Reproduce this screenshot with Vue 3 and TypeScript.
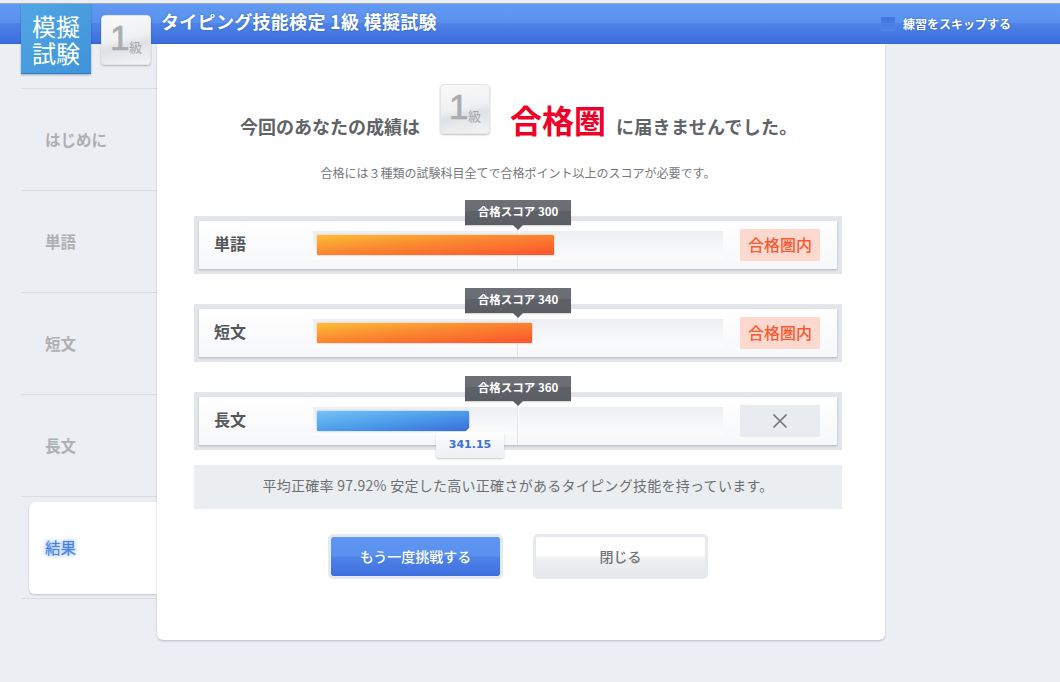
<script setup lang="ts">
interface Row {
  name: string
  score: number
  width: number
  pass: boolean
  value?: string
}
const rows: Row[] = [
  { name: '単語', score: 300, width: 237, pass: true },
  { name: '短文', score: 340, width: 215, pass: true },
  { name: '長文', score: 360, width: 152, pass: false, value: '341.15' },
]
const nav = ['はじめに', '単語', '短文', '長文', '結果']
</script>

<template>
  <div class="page">
    <header class="bar">
      <h1 class="title">タイピング技能検定 1級 模擬試験</h1>
      <div class="skip"><span class="check"></span><span>練習をスキップする</span></div>
    </header>
    <div class="logo">模擬<br />試験</div>
    <div class="grade grade-top"><span class="one">1</span><span class="kyu">級</span></div>
    <div class="body">
      <nav class="side">
        <div v-for="(n, i) in nav" :key="n" class="nav-item" :class="{ active: i === 4 }">
          <span class="nav-text">{{ n }}</span>
        </div>
      </nav>
      <main class="panel">
        <div class="headline">
          <span class="lead">今回のあなたの成績は</span>
          <div class="grade grade-mid"><span class="one">1</span><span class="kyu">級</span></div>
          <strong class="zone">合格圏</strong>
          <span class="tail">に届きませんでした。</span>
        </div>
        <p class="note">合格には３種類の試験科目全てで合格ポイント以上のスコアが必要です。</p>
        <section class="rows">
          <div v-for="r in rows" :key="r.name" class="row">
            <div class="tip">合格スコア {{ r.score }}</div>
            <div class="row-in">
              <div class="marker"></div>
              <div class="label">{{ r.name }}</div>
              <div class="track">
                <div class="fill" :class="r.pass ? 'ok' : 'ng'" :style="{ width: r.width + 'px' }"></div>
              </div>
              <div v-if="r.pass" class="status ok-s"><span>合格圏内</span></div>
              <div v-else class="status ng-s">
                <svg width="16" height="16" viewBox="0 0 16 16"><path d="M1.5 1.5 14.5 14.5M14.5 1.5 1.5 14.5" stroke="#6f7378" stroke-width="1.6" fill="none" /></svg>
              </div>
            </div>
            <div v-if="r.value" class="value">{{ r.value }}</div>
          </div>
        </section>
        <p class="summary">平均正確率 97.92% 安定した高い正確さがあるタイピング技能を持っています。</p>
        <div class="actions">
          <button class="btn primary" type="button"><span>もう一度挑戦する</span></button>
          <button class="btn plain" type="button"><span>閉じる</span></button>
        </div>
      </main>
    </div>
  </div>
</template>

<style scoped>
.page {
  position: relative;
  width: 1060px;
  height: 682px;
  overflow: hidden;
  padding-top: 3px;
  box-sizing: border-box;
  font-family: "Noto Sans CJK JP", "Noto Sans", sans-serif;
}
.bar {
  height: 41px;
  box-sizing: border-box;
  border-top: 1px solid #9fa9b5;
  border-bottom: 1px solid #3465d2;
  background: linear-gradient(#6199f1 0, #5a90ee 50%, #4f83e7 50%, #3c6fde 100%);
  display: flex;
  justify-content: space-between;
  align-items: flex-start;
  padding: 0 49px 0 161px;
  color: #fff;
}
.title {
  margin: 5px 0 0;
  font-size: 18px;
  line-height: 24px;
  letter-spacing: .3px;
  font-weight: 700;
  text-shadow: 0 0 2px rgba(20, 50, 130, .5);
}
.skip {
  display: flex;
  align-items: center;
  gap: 8px;
  margin-top: 13px;
  font-size: 12px;
  line-height: 14px;
  font-weight: 700;
  text-shadow: 0 0 2px rgba(20, 50, 130, .5);
}
.check {
  width: 14px;
  height: 14px;
  background: linear-gradient(#4172de, #5085e8);
}
.logo {
  position: absolute;
  left: 21px;
  top: 4px;
  width: 70px;
  height: 70px;
  border-bottom: 1px solid #3278bd;
  box-sizing: border-box;
  background: linear-gradient(135deg, #52a6e4, #3f94da);
  box-shadow: 0 1px 2px rgba(0, 40, 90, .35);
  color: #fff;
  font-size: 24px;
  line-height: 27px;
  text-align: center;
  padding-top: 8px;
  z-index: 3;
}
.grade {
  position: relative;
  width: 50px;
  height: 50px;
  box-sizing: border-box;
  border: 1px solid #e2e4e6;
  border-radius: 4px;
  background: linear-gradient(168deg, #f9f9fa 0, #f0f1f2 46%, #dfe2e5 60%, #e8eaec 78%, #f3f4f5 100%);
  box-shadow: 0 1px 2px rgba(0, 0, 0, .25);
  flex: none;
}
.grade-top {
  position: absolute;
  left: 101px;
  top: 15px;
  z-index: 3;
}
.one {
  position: absolute;
  left: 8px;
  top: 0;
  font: 400 35px/44px "Liberation Sans", sans-serif;
  -webkit-text-stroke: .7px #a9acb0;
  color: #a9acb0;
}
.kyu {
  position: absolute;
  left: 27px;
  top: 22px;
  font-size: 13px;
  line-height: 18px;
  font-weight: 400;
  color: #a3a6aa;
}
.body {
  display: flex;
  align-items: flex-start;
  padding-left: 21px;
}
.side {
  width: 136px;
  margin-top: 44px;
  border-top: 1px solid #d8dbe0;
  flex: none;
}
.nav-item {
  position: relative;
  height: 101px;
  display: flex;
  align-items: center;
  padding-left: 24px;
  border-bottom: 1px solid #d8dbe0;
  font-size: 15.5px;
  font-weight: 700;
  color: #adafb2;
}
.nav-item.active {
  color: #4a80e6;
  font-weight: 400;
  text-shadow: 0 0 3px #7aa9f5, 0 0 7px #a8c8f8;
}
.nav-item.active::before {
  content: "";
  position: absolute;
  left: 8px;
  right: 0;
  top: 5px;
  bottom: 4px;
  background: #fff;
  border-radius: 6px 0 0 6px;
  box-shadow: 0 1px 2px rgba(60, 70, 90, .25);
}
.nav-text {
  position: relative;
  top: -1px;
}
.panel {
  width: 728px;
  height: 596px;
  box-sizing: border-box;
  background: #fff;
  border-radius: 0 0 6px 6px;
  box-shadow: 0 1px 2px rgba(60, 70, 90, .3);
  padding: 40px 43px 0 37px;
  position: relative;
  z-index: 1;
}
.headline {
  display: flex;
  align-items: center;
  height: 50px;
  padding-left: 46px;
  font-size: 18px;
  line-height: 26px;
  font-weight: 700;
  color: #606368;
}
.lead {
  margin-top: 33px;
}
.grade-mid {
  margin-left: 20px;
}
.zone {
  margin-left: 20px;
  margin-top: 20px;
  font-size: 32px;
  line-height: 40px;
  font-weight: 700;
  color: #f00028;
}
.tail {
  margin-left: 10px;
  margin-top: 33px;
  letter-spacing: .3px;
}
.note {
  margin: 29px 0 0;
  font-size: 12px;
  line-height: 20px;
  text-align: center;
  color: #75787c;
}
.rows {
  margin-top: 33px;
  display: flex;
  flex-direction: column;
  gap: 30px;
}
.row {
  position: relative;
  height: 58px;
  box-sizing: border-box;
  padding: 5px;
  background: #e2e5e9;
}
.row-in {
  position: relative;
  height: 48px;
  display: flex;
  align-items: center;
  background: linear-gradient(#fff, #f6f7f9);
  box-shadow: 0 1px 2px rgba(80, 90, 100, .35);
}
.label {
  width: 114px;
  flex: none;
  box-sizing: border-box;
  padding: 0 0 4px 15px;
  font-size: 16px;
  font-weight: 700;
  color: #55585c;
}
.track {
  width: 410px;
  height: 28px;
  box-sizing: border-box;
  padding: 4px;
  background: linear-gradient(#eeeff2, #fcfcfd);
}
.fill {
  position: relative;
  z-index: 2;
  height: 20px;
  border-radius: 1px;
}
.fill.ok {
  background: linear-gradient(to bottom right, #fcc035, #fa8b30 42%, #fa5a2d 92%);
  box-shadow: 0 0 2px rgba(230, 110, 70, .6);
}
.fill.ng {
  background: linear-gradient(to bottom right, #74c2f8, #4d9eea 50%, #3a72dc 95%);
  box-shadow: 0 0 2px rgba(70, 120, 220, .6);
}
.status {
  width: 80px;
  height: 32px;
  margin-left: 17px;
  display: flex;
  align-items: center;
  justify-content: center;
  font-size: 16px;
  font-weight: 500;
}
.status span {
  position: relative;
  top: -1px;
}
.ok-s {
  background: #fdd8cf;
  color: #fa5a32;
}
.ng-s {
  background: #e8ebef;
}
.marker {
  position: absolute;
  left: 318px;
  top: 0;
  bottom: 0;
  width: 1px;
  background: #e4e6e9;
  box-shadow: 1px 0 0 rgba(255, 255, 255, .8);
  z-index: 1;
}
.tip {
  position: absolute;
  left: 271px;
  top: -16px;
  width: 106px;
  height: 25px;
  background: linear-gradient(#6e7077 0, #6a6c73 45%, #5f6168 46%, #5b5d64 100%);
  color: #fff;
  font-size: 11.5px;
  line-height: 23px;
  font-weight: 700;
  text-align: center;
  z-index: 3;
  box-shadow: 0 1px 1px rgba(0, 0, 0, .15);
}
.tip::after {
  content: "";
  position: absolute;
  left: 48px;
  top: 25px;
  border: 5px solid transparent;
  border-bottom-width: 0;
  border-top-color: #5b5d64;
}
.value {
  position: absolute;
  left: 242px;
  top: 40px;
  width: 68px;
  height: 26px;
  box-sizing: border-box;
  background: linear-gradient(#fff, #eceef2);
  border-radius: 2px;
  box-shadow: 0 1px 2px rgba(80, 90, 100, .3);
  color: #3f6fd8;
  font: 700 11px/25px "DejaVu Sans", sans-serif;
  text-align: center;
  z-index: 3;
}
.value::before {
  content: "";
  position: absolute;
  left: 29px;
  top: -4px;
  border: 4px solid transparent;
  border-top-width: 0;
  border-bottom-color: #fff;
}
.summary {
  margin: 15px 0 0;
  height: 44px;
  background: #ebeef1;
  font-size: 14px;
  line-height: 40px;
  letter-spacing: .28px;
  text-align: center;
  color: #6b6e72;
}
.actions {
  margin-top: 25px;
  display: flex;
  gap: 30px;
  padding-left: 134px;
}
.btn {
  width: 175px;
  height: 45px;
  padding: 0 0 2px;
  border: 3px solid #e6e9ed;
  border-radius: 5px;
  font: 500 14px/1 "Noto Sans CJK JP", sans-serif;
  box-sizing: border-box;
  background-clip: padding-box;
}
.primary {
  color: #fff;
  background-image: linear-gradient(#5f96f2 0, #5a8fee 48%, #4f83e7 52%, #3c6fde 100%);
}
.plain {
  color: #707377;
  background-image: linear-gradient(#fff 0, #fff 45%, #f0f1f3 55%, #e5e7ea 100%);
}
</style>

<style>
html, body {
  margin: 0;
  background: #ebeef2;
}
</style>
